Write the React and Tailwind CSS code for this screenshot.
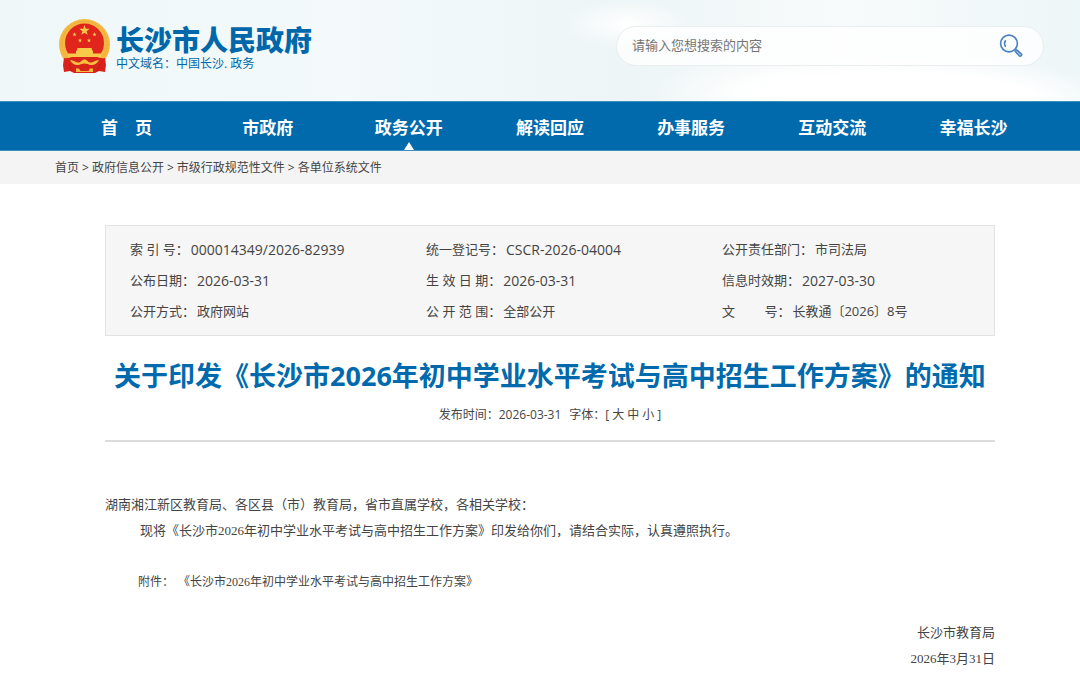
import clsx from 'clsx';

const NAV_ITEMS = [
  { label: '首\u3000页' },
  { label: '市政府' },
  { label: '政务公开', active: true },
  { label: '解读回应' },
  { label: '办事服务' },
  { label: '互动交流' },
  { label: '幸福长沙' }
];

const CRUMBS = ['首页', '政府信息公开', '市级行政规范性文件', '各单位系统文件'];

const DOC_INFO = [
  { label: '索 引 号：', value: '000014349/2026-82939', numeric: true },
  { label: '统一登记号：', value: 'CSCR-2026-04004', numeric: true },
  { label: '公开责任部门：', value: '市司法局' },
  { label: '公布日期：', value: '2026-03-31', numeric: true },
  { label: '生 效 日 期：', value: '2026-03-31', numeric: true },
  { label: '信息时效期：', value: '2027-03-30', numeric: true },
  { label: '公开方式：', value: '政府网站' },
  { label: '公 开 范 围：', value: '全部公开' },
  { label: '文\u3000\u3000 号：', value: '长教通〔2026〕8号' }
];

export default function App() {
  return (
    <div
      lang="zh-CN"
      className="min-h-screen bg-white font-['Open_Sans','Noto_Sans_CJK_SC',sans-serif] text-[#444444] [text-spacing-trim:space-all]">
      <Header />
      <MainNav />
      <Breadcrumb />
      <main className="mt-[41px] pl-[105px] pr-[85px]">
        <DocInfo />
        <Article />
      </main>
    </div>
  );
}

function Header() {
  return (
    <header className="flex h-[101px] items-center justify-between bg-[#eff7f8] bg-[radial-gradient(ellipse_20%_45%_at_84%_100%,#ffffff_60%,transparent_100%),radial-gradient(ellipse_14%_35%_at_74%_90%,#ffffff_20%,transparent_100%),radial-gradient(ellipse_6%_25%_at_58%_24%,#ffffff_0%,transparent_100%),linear-gradient(90deg,#eff7f8_0%,#f4fafb_32%,#edf5f6_58%,#f8fbfb_78%,#edf6f8_100%)] pb-[9px] pl-14 pr-9">
      <a href="#home" className="flex items-center gap-1 text-[#0068aa]">
        <Emblem className="h-14 w-14" />
        <span className="flex flex-col">
          <span className="text-[28px] font-black leading-9">长沙市人民政府</span>
          <span className="text-xs leading-3 whitespace-pre">中文域名：中国长沙. 政务</span>
        </span>
      </a>
      <form
        role="search"
        onSubmit={(e) => e.preventDefault()}
        className="flex h-10 w-[428px] items-center rounded-full border border-[#e9eeef] bg-white/80 pl-[15px] pr-5">
        <input
          type="text"
          aria-label="搜索"
          placeholder="请输入您想搜索的内容"
          className="min-w-0 flex-1 bg-transparent text-[13px] outline-none placeholder:text-[#757575]" />
        <button type="submit" aria-label="搜索" className="shrink-0">
          <SearchIcon />
        </button>
      </form>
    </header>
  );
}

function MainNav() {
  return (
    <nav className="flex h-[50px] border-y border-[#3a8fbd] bg-[#006aad] pl-14 pr-9">
      {NAV_ITEMS.map((item) => (
        <a
          key={item.label}
          href="#nav"
          className={clsx(
            'relative flex flex-1 items-center justify-center pt-[3px] text-[17px] font-bold text-white',
            item.active &&
              'after:absolute after:bottom-0 after:border-x-[5px] after:border-b-8 after:border-x-transparent after:border-b-white'
          )}>
          {item.label}
        </a>
      ))}
    </nav>
  );
}

function Breadcrumb() {
  return (
    <div className="flex h-[33px] items-center gap-[3px] bg-[#f4f4f4] pl-[55px] text-xs">
      {CRUMBS.map((crumb, i) => (
        <span key={crumb} className="flex gap-[3px]">
          {i > 0 && <span>&gt;</span>}
          <a href="#crumb">{crumb}</a>
        </span>
      ))}
    </div>
  );
}

function DocInfo() {
  return (
    <dl className="grid grid-cols-3 border border-[#e2e2e2] bg-[#f6f6f6] py-2 text-[13px] leading-[31px]">
      {DOC_INFO.map((row) => (
        <div key={row.label} className="flex gap-[2px] pl-6 whitespace-pre">
          <dt>{row.label}</dt>
          <dd className={clsx(row.numeric && 'text-sm leading-[31px]')}>{row.value}</dd>
        </div>
      ))}
    </dl>
  );
}

function Article() {
  return (
    <article>
      <h1 className="mt-5 text-center text-[27px] font-bold leading-10 text-[#006aad]">
        关于印发《长沙市2026年初中学业水平考试与高中招生工作方案》的通知
      </h1>
      <div className="mt-[9px] flex justify-center gap-2 border-b-2 border-[#dcdcdc] pb-[15px] text-xs leading-5">
        <span>发布时间：2026-03-31</span>
        <span className="flex gap-[3px]">
          字体：[
          <button type="button">大</button>
          <button type="button">中</button>
          <button type="button">小</button>
          ]
        </span>
      </div>
      <div className="mt-[50px] font-['Liberation_Serif','Noto_Sans_CJK_SC',serif] text-[13px] leading-[26px]">
        <p>湖南湘江新区教育局、各区县（市）教育局，省市直属学校，各相关学校：</p>
        <p className="pl-[35px]">
          现将《长沙市2026年初中学业水平考试与高中招生工作方案》印发给你们，请结合实际，认真遵照执行。
        </p>
        <p className="mt-[25px] flex gap-1 pl-[33px] text-xs leading-[26px]">
          <span>附件：</span>
          <a href="#attachment">《长沙市2026年初中学业水平考试与高中招生工作方案》</a>
        </p>
        <p className="mt-[25px] text-right">长沙市教育局</p>
        <p className="text-right">2026年3月31日</p>
      </div>
    </article>
  );
}

function SearchIcon() {
  return (
    <svg width="24" height="24" viewBox="0 0 24 24" fill="none" stroke="#4a80c4" strokeWidth="1.6" strokeLinecap="round">
      <circle cx="10" cy="9.500" r="8.400" />
      <path d="M6.400 6.800a5 5 0 0 0 0 5.400" />
      <path d="M16.200 17.200l1.400-1.400 4.600 4a1.400 1.400 0 0 1-2 2z" fill="#4a80c4" fillOpacity=".35" strokeLinejoin="round" />
    </svg>
  );
}

const STAR = 'M0-1L.24-.31.95-.31.38.12.59.81 0 .4-.59.81-.38.12-.95-.31-.24-.31Z';

function Emblem({ className }) {
  return (
    <svg viewBox="0 0 56 56" className={className} aria-hidden="true">
      <circle cx="28.5" cy="26.5" r="25.500" fill="#f4b942" />
      <circle cx="28.500" cy="26" r="22.500" fill="none" stroke="#e9a233" strokeWidth=".8" strokeDasharray="2 1.500" />
      <circle cx="28.500" cy="25" r="19.500" fill="#e0261c" />
      <g fill="#f9ca4a">
        <path d={STAR} transform="translate(28.500 12.500) scale(5.400)" />
        <path d={STAR} transform="translate(18.500 16.500) scale(2.200)" />
        <path d={STAR} transform="translate(38.500 16.500) scale(2.200)" />
        <path d={STAR} transform="translate(24 22.500) scale(2.200)" />
        <path d={STAR} transform="translate(33 22.500) scale(2.200)" />
        <path d="M21.500 30h14l1 3h-16z" />
        <path d="M20 33h17v2.500h8V39H12v-3.500h8z" />
      </g>
      {/* red drapes under the wreath */}
      <path d="M8 40c4 1 6-1 9-1h23c3 0 5 2 9 1l1 7-1 7-6-1-4 2H18l-4-2-6 1-1-7z" fill="#d8231b" />
      <path
        d="M14 42c4 0 6 3 9 2.500 2.500-.4 3-3 5.500-3s3 2.600 5.500 3c3 .5 5-2.500 9-2.500-2 4-5 5.500-8.500 5-2.500-.4-3.500-1.500-6-1.500s-3.500 1.100-6 1.500c-3.500.5-6.500-1-8.500-5z"
        fill="#f7bf42" />
      <path d="M20 50.500h3l1.500 2.500h8l1.500-2.500h3V54H20z" fill="#f4b942" />
      <path d="M13 46l3 7M44 46l-3 7" fill="none" stroke="#b81a14" strokeWidth=".8" />
    </svg>
  );
}
